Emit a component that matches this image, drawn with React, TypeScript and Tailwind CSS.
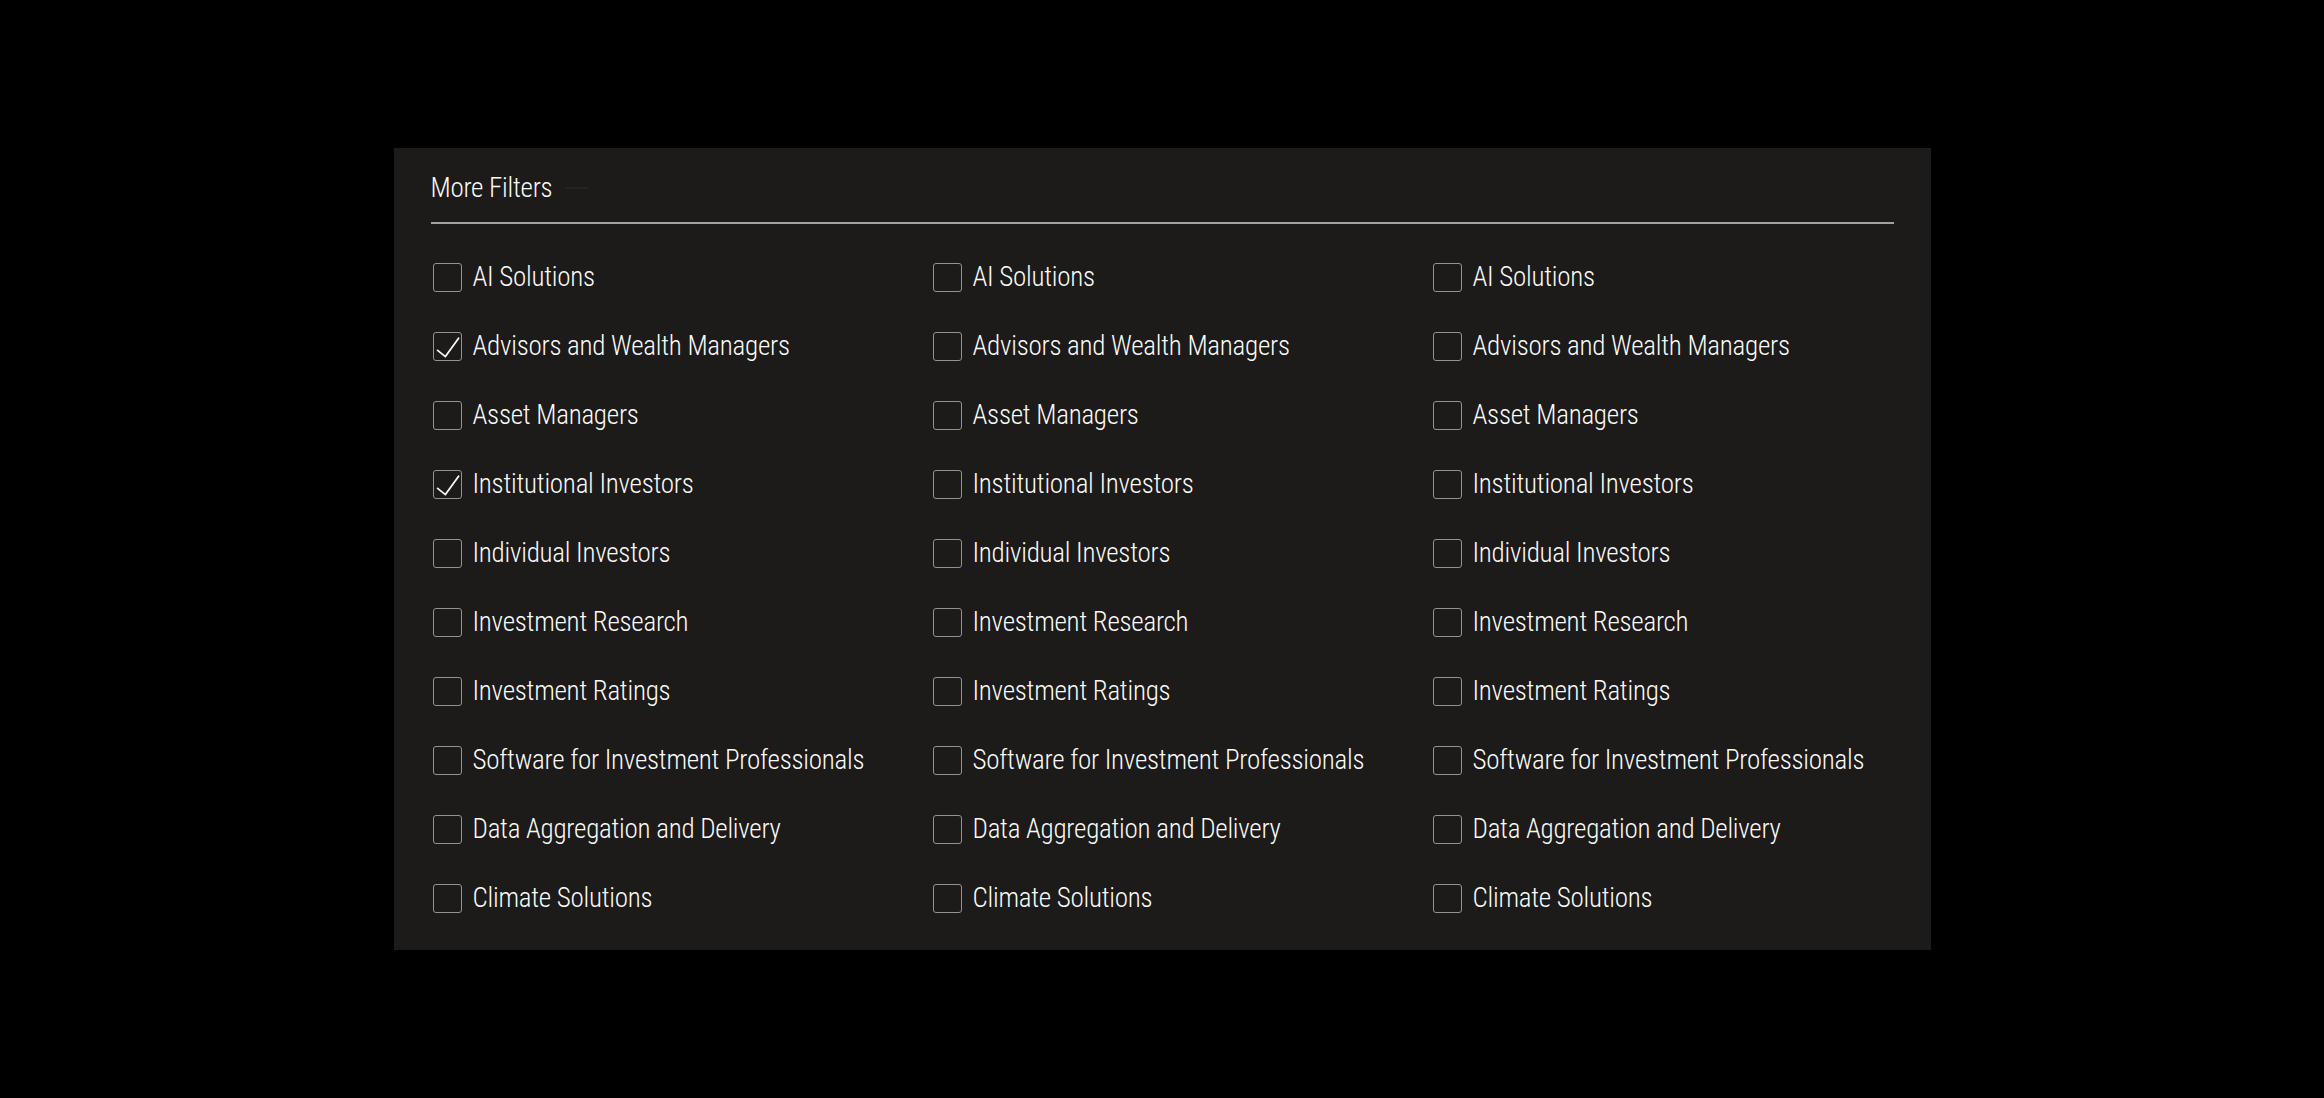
import React, { useState } from 'react';

const FILTERS = [
  'AI Solutions',
  'Advisors and Wealth Managers',
  'Asset Managers',
  'Institutional Investors',
  'Individual Investors',
  'Investment Research',
  'Investment Ratings',
  'Software for Investment Professionals',
  'Data Aggregation and Delivery',
  'Climate Solutions',
];

const COLUMNS = 3;

type CheckboxProps = {
  label: string;
  checked: boolean;
  onToggle: () => void;
};

const FilterCheckbox: React.FC<CheckboxProps> = ({ label, checked, onToggle }) => (
  <label className="flex h-[32px] cursor-pointer items-center gap-[11px] pl-[2px]">
    <button
      type="button"
      role="checkbox"
      aria-checked={checked}
      onClick={onToggle}
      className="flex h-[29px] w-[29px] shrink-0 items-center justify-center rounded-[3px] border-[1.5px] border-[#929290] bg-transparent"
    >
      {checked && (
        <svg width="29" height="29" viewBox="0 0 29 29" fill="none" className="-m-[1.5px]">
          <path
            d="M4.6 18.4 L12.4 24.6 L25.6 6.2"
            stroke="#f8f8f6"
            strokeWidth="1.8"
            strokeLinecap="round"
            strokeLinejoin="round"
          />
        </svg>
      )}
    </button>
    <span className="whitespace-nowrap leading-[32px]">{label}</span>
  </label>
);

export default function App() {
  // checked state keyed by "row-col"
  const [checked, setChecked] = useState<Record<string, boolean>>({
    '1-0': true,
    '3-0': true,
  });

  const toggle = (key: string) =>
    setChecked((prev) => ({ ...prev, [key]: !prev[key] }));

  return (
    <div className="min-h-screen bg-black pt-[148px] font-['Roboto_Condensed','Liberation_Sans',sans-serif] font-light text-[27px] tracking-[-0.25px] text-[#fafaf8]">
      <section className="mx-auto w-[1537px] bg-[#1c1b1a] px-[37px] pt-[24px] pb-[36px]">
        {/* Header */}
        <div className="flex items-center">
          <h2 className="leading-[32px] font-light">More Filters</h2>
          <span className="ml-[13px] h-[2px] w-[23px] bg-[#252422]" />
        </div>
        <div className="mt-[18px] h-[2px] w-full bg-[#a2a2a0]" />

        {/* Filter grid */}
        <div className="mt-[37px] grid grid-cols-3 gap-x-[37px] gap-y-[37px]">
          {FILTERS.map((label, row) =>
            Array.from({ length: COLUMNS }).map((_, col) => {
              const key = `${row}-${col}`;
              return (
                <FilterCheckbox
                  key={key}
                  label={label}
                  checked={!!checked[key]}
                  onToggle={() => toggle(key)}
                />
              );
            })
          )}
        </div>
      </section>
    </div>
  );
}
